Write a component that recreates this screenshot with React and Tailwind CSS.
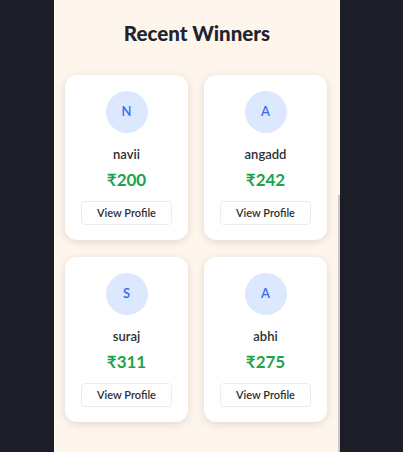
import React from "react";

const winners = [
  { name: "navii", amount: 200 },
  { name: "angadd", amount: 242 },
  { name: "suraj", amount: 311 },
  { name: "abhi", amount: 275 },
];

function Card({ name, amount }) {
  return (
    <div className="flex h-[165px] flex-col items-center rounded-xl bg-white pt-4 shadow-[0_2px_8px_rgba(0,0,0,0.12)]">
      <div className="flex h-[42px] w-[42px] items-center justify-center rounded-full bg-[#dbe8fe] text-[13px] font-semibold text-[#3b6be6]">
        {name[0].toUpperCase()}
      </div>
      <div className="mt-[12px] text-[13px] font-semibold leading-[18px] text-[#2d2f36]">{name}</div>
      <div className="mt-[6px] text-[17px] font-bold leading-[22px] text-[#1ea34d]">₹{amount}</div>
      <button className="mt-[10px] h-[24px] w-[91px] rounded-[4px] border border-[#ececec] bg-white text-[11px] font-semibold text-[#2d2f36]">
        View Profile
      </button>
    </div>
  );
}

export default function App() {
  return (
    <div className="flex h-[452px] w-[403px] justify-center bg-[#1b1e26] pl-[54px] pr-[63px]" style={{ fontFamily: 'Lato, "Noto Sans", sans-serif' }}>
      <div className="relative h-full w-[286px] bg-[#fef5ec] px-[11px]">
        <h2 className="pt-[19px] text-center text-[20.5px] font-black leading-[28px] text-[#1f2430]">Recent Winners</h2>
        <div className="mt-[28px] grid grid-cols-2 gap-x-[16px] gap-y-[17px] pr-[2px]">
          {winners.map((w) => (
            <Card key={w.name} {...w} />
          ))}
        </div>
        <div className="absolute right-0 top-[195px] h-[257px] w-[2px] bg-[#c9c9cc]" />
      </div>
    </div>
  );
}
